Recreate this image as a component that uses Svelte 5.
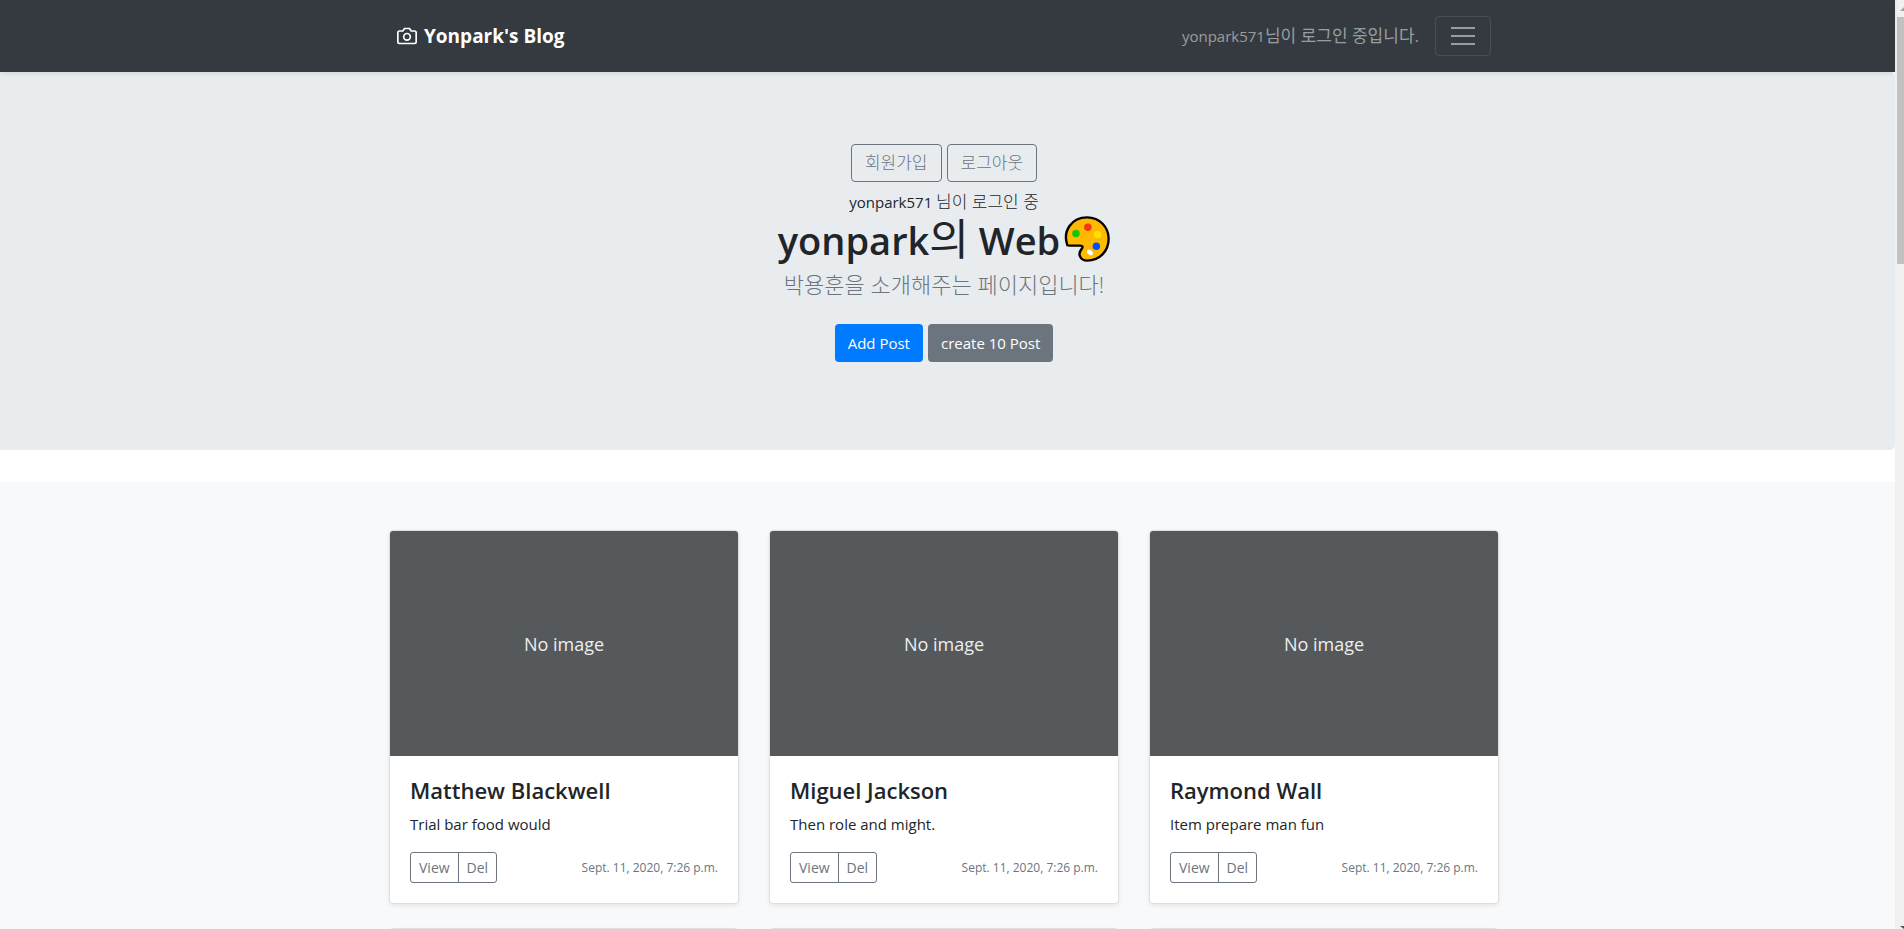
<script>
  const posts = [
    { title: 'Matthew Blackwell', text: 'Trial bar food would' },
    { title: 'Miguel Jackson', text: 'Then role and might.' },
    { title: 'Raymond Wall', text: 'Item prepare man fun' }
  ];
  const date = 'Sept. 11, 2020, 7:26 p.m.';
</script>

<div class="window">
  <div class="page">
    <header class="navbar">
      <nav class="container bar">
        <a class="brand" href="#home">
          <svg width="20" height="20" viewBox="0 0 24 24" fill="none" stroke="currentColor" stroke-width="2" aria-hidden="true">
            <path d="M23 19a2 2 0 0 1-2 2H3a2 2 0 0 1-2-2V8a2 2 0 0 1 2-2h4l2-3h6l2 3h4a2 2 0 0 1 2 2z" />
            <circle cx="12" cy="13" r="4" />
          </svg>
          <strong>Yonpark's Blog</strong>
        </a>
        <span class="login">yonpark571<span class="ko">님이 로그인 중입니다.</span></span>
        <button class="toggler" aria-label="Toggle navigation">
          <svg width="30" height="30" viewBox="0 0 30 30" stroke="currentColor" stroke-width="2" stroke-miterlimit="10" stroke-linecap="butt">
            <path d="M3 7h24M3 15h24M3 23h24" />
          </svg>
        </button>
      </nav>
    </header>

    <section class="hero">
      <div class="buttons">
        <button class="btn outline">회원가입</button>
        <button class="btn outline">로그아웃</button>
      </div>
      <p class="status">yonpark571 <span class="ko">님이 로그인 중</span></p>
      <h1>
        <span>yonpark<span class="thin">의</span> Web</span>
        <svg class="palette" width="46" height="46" viewBox="0 0 135 135" aria-hidden="true">
          <path d="M10 86C-5 44 22 4 68 4c37 0 63 29 63 63 0 37-27 64-63 64-20 0-29-19-17-33 6-8 4-11-4-11H17q-5 0-7-1z" fill="#ffb900" stroke="#000" stroke-width="7" stroke-linejoin="round" />
          <circle cx="35" cy="51" r="11" fill="#16c60c" />
          <circle cx="70" cy="33" r="11" fill="#f03a17" />
          <circle cx="99" cy="54" r="11" fill="#ffe000" />
          <circle cx="95" cy="89" r="11" fill="#0050ff" />
          <ellipse cx="76" cy="107" rx="10" ry="7" transform="rotate(40 76 107)" fill="#fff" />
        </svg>
      </h1>
      <p class="lead">박용훈을 소개해주는 페이지입니다!</p>
      <div class="buttons">
        <button class="btn primary">Add Post</button>
        <button class="btn secondary">create 10 Post</button>
      </div>
    </section>

    <main class="album">
      <div class="container cards">
        {#each posts as post}
          <article class="card">
            <div class="thumb">No image</div>
            <div class="body">
              <h2>{post.title}</h2>
              <p>{post.text}</p>
              <div class="foot">
                <div class="group">
                  <button>View</button>
                  <button>Del</button>
                </div>
                <small>{date}</small>
              </div>
            </div>
          </article>
        {/each}
        {#each posts as _}
          <article class="card"><div class="thumb"></div></article>
        {/each}
      </div>
    </main>
  </div>

  <div class="scrollbar" aria-hidden="true">
    <svg class="arrow" width="7" height="17" viewBox="0 0 7 17"><path d="M3 11L7 7v4z" fill="#a3a3a3" /></svg>
    <div class="thumb-bar"></div>
    <svg class="arrow end" width="7" height="17" viewBox="0 0 7 17"><path d="M3 14h4v3z" fill="#505050" /></svg>
  </div>
</div>

<style>
  :global(body) { margin: 0; }
  * { box-sizing: border-box; }
  h1, h2, p { margin: 0; }
  button { font: inherit; color: inherit; background: none; cursor: pointer; }

  .window {
    display: flex;
    height: 100vh;
    overflow: hidden;
    background: #fff;
    color: #212529;
    font: 400 15px/24px "Open Sans", "Noto Sans CJK KR", sans-serif;
  }
  .page { flex: 1; min-width: 0; }
  .container { width: 100%; max-width: 1110px; margin: 0 auto; }
  .ko { font-size: 17px; }

  .navbar {
    position: relative;
    padding: 16px 7px 16px 0;
    background: #343a40;
    box-shadow: 0 2px 4px rgba(0, 0, 0, .075);
  }
  .bar { display: flex; align-items: center; gap: 16px; padding: 0 8px; }
  .brand {
    display: flex;
    align-items: center;
    gap: 7px;
    margin-right: auto;
    color: #fff;
    font-size: 19px;
    text-decoration: none;
  }
  .login { color: rgba(255, 255, 255, .5); }
  .toggler {
    display: flex;
    height: 40px;
    padding: 4px 12px;
    align-items: center;
    color: rgba(255, 255, 255, .5);
    border: 1px solid rgba(255, 255, 255, .1);
    border-radius: 4px;
  }

  .hero {
    display: flex;
    flex-direction: column;
    align-items: center;
    padding: 72px 7px 88px 0;
    background: #e9ecef;
    border-radius: 0 5px 5px 0;
  }
  .buttons { display: flex; gap: 5px; }
  .btn {
    height: 38px;
    padding: 0 12px;
    border: 1px solid transparent;
    border-radius: 4px;
  }
  .outline { padding: 0 13px; color: #6c757d; border-color: #6c757d; font-size: 17px; font-weight: 300; }
  .primary { color: #fff; background: #007bff; }
  .secondary { color: #fff; background: #6c757d; }
  .status { margin-top: 8px; }
  .status .ko { font-weight: 300; }
  h1 {
    display: flex;
    align-items: center;
    gap: 4px;
    height: 48px;
    margin-top: 1px;
    font-size: 38px;
    font-weight: 600;
  }
  .thin { font-size: 43px; font-weight: 400; }
  .lead { margin: 6px 0 25px; color: #6c757d; font-size: 22px; line-height: 30px; font-weight: 300; }

  .album { margin-top: 32px; padding: 48px 7px 48px 0; background: #f8f9fa; }
  .cards { display: grid; grid-template-columns: repeat(3, 1fr); gap: 24px 30px; }
  .card {
    overflow: hidden;
    background: #fff;
    border: 1px solid #dfdfdf;
    border-radius: 4px;
    box-shadow: 0 2px 4px rgba(0, 0, 0, .075);
  }
  .thumb {
    display: flex;
    align-items: center;
    justify-content: center;
    height: 225px;
    background: #55595c;
    color: #eceeef;
    font-size: 18px;
  }
  .body { padding: 20px; }
  h2 { font-size: 22px; line-height: 28px; font-weight: 600; margin-bottom: 8px; }
  .foot { display: flex; align-items: center; justify-content: space-between; margin-top: 16px; }
  .group { display: flex; color: #6c757d; font-size: 14px; line-height: 21px; }
  .group button { height: 31px; padding: 0 8px; border: 1px solid #6c757d; border-radius: 3px 0 0 3px; }
  .group button + button { margin-left: -1px; border-radius: 0 3px 3px 0; }
  small { color: #6c757d; font-size: 12px; }

  .scrollbar { display: flex; flex-direction: column; width: 9px; padding-left: 2px; background: #f1f1f1; }
  .arrow { flex: none; display: block; }
  .thumb-bar { height: 247px; background: #c1c1c1; }
  .end { margin-top: auto; }
</style>
